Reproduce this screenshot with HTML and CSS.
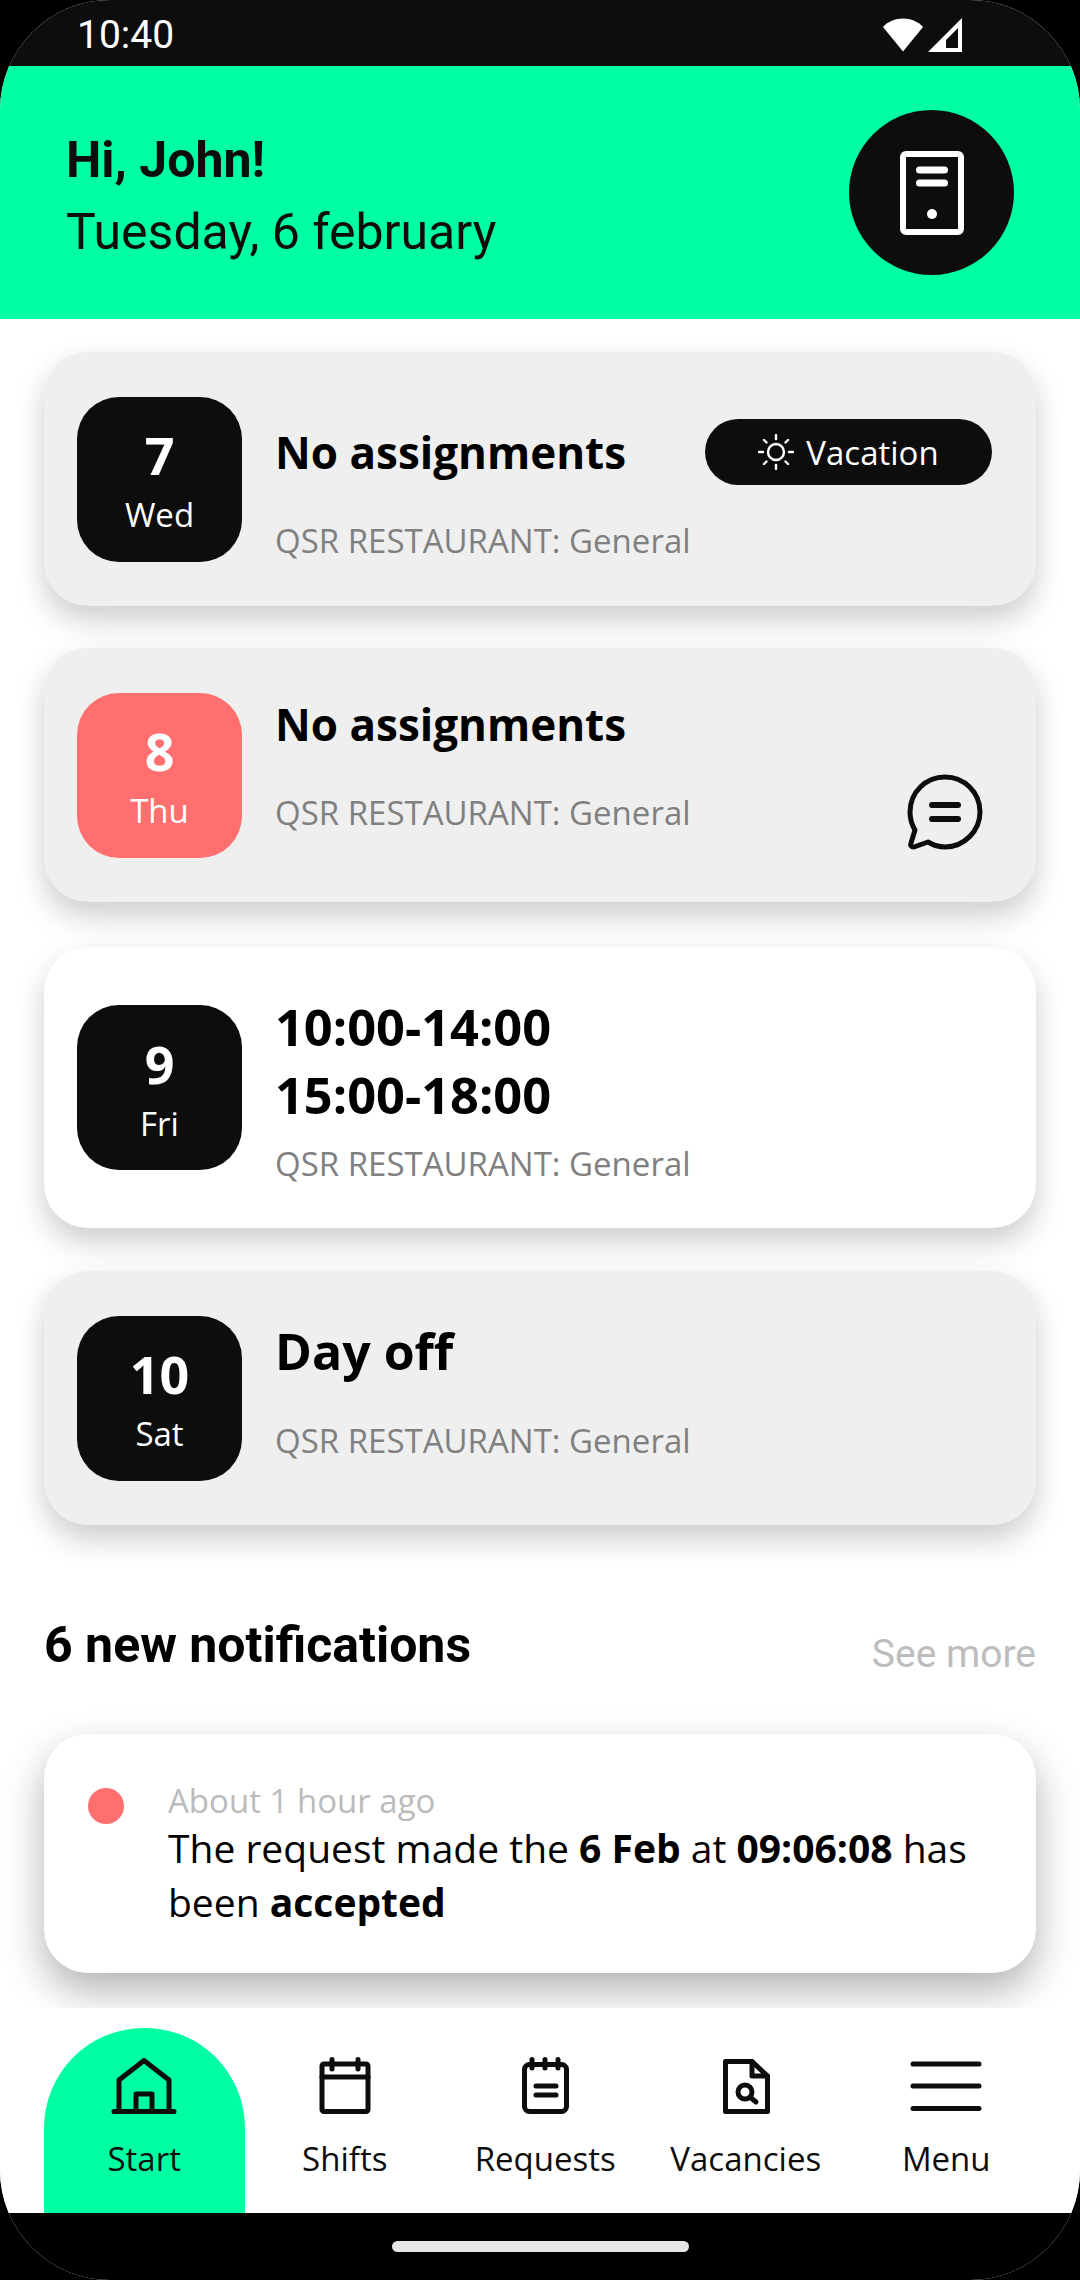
FILE: index.html
```html
<!DOCTYPE html>
<html lang="en">
<head>
  <meta charset="UTF-8">
  <title>Start</title>
  <meta name="viewport" content="width=device-width, initial-scale=1">
  <link rel="stylesheet" href="styles.css">
</head>
<body>
  <div class="screen">
    <div class="status-bar">
      <span class="clock">10:40</span>
      <span class="status-icons">
        <svg width="40" height="34" viewBox="0 0 40 34"><path d="M20 33.500 L0 9 C5 3.500 12 0.500 20 0.500 C28 0.500 35 3.500 40 9 Z" fill="#fff"/></svg>
        <svg width="34" height="34" viewBox="0 0 34 34"><path d="M34 0 V34 H0 Z M30 10 L18 22 V30 H30 Z" fill="#fff" fill-rule="evenodd"/></svg>
      </span>
    </div>

    <header class="top">
      <div>
        <div class="hello">Hi, John!</div>
        <div class="today">Tuesday, 6 february</div>
      </div>
      <div class="avatar">
        <svg width="64" height="84" viewBox="0 0 64 84" fill="none" stroke="#fff" stroke-width="6">
          <rect x="3" y="3" width="58" height="78" rx="3"/>
          <path d="M19.500 19 H44.500 M19.500 32 H44.500" stroke-width="7" stroke-linecap="round"/>
          <circle cx="32" cy="63" r="5" fill="#fff" stroke="none"/>
        </svg>
      </div>
    </header>

    <main class="content">
      <section class="card card-grey card-vacation">
        <div class="date"><b>7</b><span>Wed</span></div>
        <div class="card-text">
          <div class="title-row">
            <div class="title">No assignments</div>
            <div class="badge">
              <svg width="36" height="36" viewBox="0 0 36 36" fill="none" stroke="#fff" stroke-width="2.400" stroke-linecap="round">
                <circle cx="18" cy="18" r="8"/>
                <path d="M18 1 V5 M18 31 V35 M1 18 H5 M31 18 H35 M6 6 L8.500 8.500 M27.500 27.500 L30 30 M6 30 L8.500 27.500 M27.500 8.500 L30 6"/>
              </svg>
              Vacation
            </div>
          </div>
          <div class="place">QSR RESTAURANT: General</div>
        </div>
      </section>

      <section class="card card-grey card-note">
        <div class="date date-red"><b>8</b><span>Thu</span></div>
        <div class="card-text">
          <div class="title">No assignments</div>
          <div class="place">QSR RESTAURANT: General</div>
        </div>
        <svg class="chat" width="76" height="76" viewBox="0 0 76 76" fill="none" stroke="#0d0d0d" stroke-width="5" stroke-linecap="round" stroke-linejoin="round">
          <path d="M38 3 C57 3 73 18 73 38 C73 57 57 73 38 73 C31 73 26 71 21 68 L7 73 C4 73 3 71 4 69 L8 56 C5 51 3 45 3 38 C3 18 19 3 38 3 Z"/>
          <path d="M25 31 H51 M25 45 H51" stroke-width="6"/>
        </svg>
      </section>

      <section class="card card-shift">
        <div class="date"><b>9</b><span>Fri</span></div>
        <div class="card-text">
          <div class="title">10:00-14:00</div>
          <div class="title">15:00-18:00</div>
          <div class="place">QSR RESTAURANT: General</div>
        </div>
      </section>

      <section class="card card-grey card-off">
        <div class="date"><b>10</b><span>Sat</span></div>
        <div class="card-text">
          <div class="title">Day off</div>
          <div class="place">QSR RESTAURANT: General</div>
        </div>
      </section>

      <div class="notif-head">
        <h2>6 new notifications</h2>
        <a class="more">See more</a>
      </div>

      <section class="notif">
        <span class="dot"></span>
        <div>
          <div class="ago">About 1 hour ago</div>
          <p>The request made the <b>6 Feb</b> at <b>09:06:08</b> has been <b>accepted</b></p>
        </div>
      </section>
    </main>

    <nav class="tabs">
      <div class="tab tab-active">
        <svg width="72" height="58" viewBox="0 0 72 58" fill="none" stroke="#0d0d0d" stroke-width="5" stroke-linecap="round" stroke-linejoin="round">
          <path d="M6 54.500 H66 M11 54 V23 L36 3.500 L61 23 V54"/>
          <path d="M28 54 V37 H44 V54"/>
        </svg>
        <span>Start</span>
      </div>
      <div class="tab">
        <svg width="72" height="58" viewBox="0 0 72 58" fill="none" stroke="#0d0d0d" stroke-width="5" stroke-linecap="round" stroke-linejoin="round">
          <rect x="13" y="7" width="46" height="47.500" rx="2"/>
          <path d="M13 20 H59 M23 2.500 V12 M49 2.500 V12"/>
        </svg>
        <span>Shifts</span>
      </div>
      <div class="tab">
        <svg width="72" height="58" viewBox="0 0 72 58" fill="none" stroke="#0d0d0d" stroke-width="5" stroke-linecap="round" stroke-linejoin="round">
          <rect x="15.500" y="7.500" width="42" height="47" rx="5"/>
          <path d="M23 2.500 V11 M36 2.500 V11 M49 2.500 V11 M27 29 H47 M27 38 H47"/>
        </svg>
        <span>Requests</span>
      </div>
      <div class="tab">
        <svg width="72" height="58" viewBox="0 0 72 58" fill="none" stroke="#0d0d0d" stroke-width="5" stroke-linecap="round" stroke-linejoin="round">
          <path d="M15.500 4.500 H42 L57.500 19 V54.500 H15.500 Z"/>
          <path d="M42 4.500 V19 H57.500"/>
          <circle cx="35" cy="35" r="7"/>
          <path d="M40.500 40.500 L46 45"/>
        </svg>
        <span>Vacancies</span>
      </div>
      <div class="tab">
        <svg width="72" height="58" viewBox="0 0 72 58" fill="none" stroke="#0d0d0d" stroke-width="5" stroke-linecap="round">
          <path d="M3 7 H69 M3 29 H69 M3 51.500 H69"/>
        </svg>
        <span>Menu</span>
      </div>
    </nav>

    <div class="nav-bar"><span class="home-pill"></span></div>
  </div>
</body>
</html>
```

FILE: styles.css
```css
html, body {
  margin: 0;
  padding: 0;
  background: #000;
}
body {
  font-family: 'Open Sans', sans-serif;
  color: #0d0d0d;
}
.screen {
  width: 1080px;
  height: 2280px;
  background: #fff;
  border-radius: 110px;
  overflow: hidden;
  display: flex;
  flex-direction: column;
}

/* status bar */
.status-bar {
  height: 66px;
  flex: none;
  box-sizing: border-box;
  padding: 4px 118px 0 77px;
  background: #0d0d0d;
  color: #fff;
  display: flex;
  justify-content: space-between;
  align-items: center;
}
.clock {
  font-family: Roboto, sans-serif;
  font-size: 39px;
}
.status-icons {
  display: flex;
  gap: 5px;
}

/* green header */
.top {
  height: 253px;
  flex: none;
  box-sizing: border-box;
  padding: 0 66px 0 66px;
  background: #00ffa3;
  display: flex;
  justify-content: space-between;
  align-items: center;
  font-family: Roboto, sans-serif;
  font-size: 50px;
  color: #0d0d0d;
}
.hello {
  margin-top: 6px;
  font-weight: 700;
  line-height: 72px;
}
.today {
  line-height: 72px;
}
.avatar {
  width: 165px;
  height: 165px;
  border-radius: 50%;
  background: #0d0d0d;
  display: flex;
  align-items: center;
  justify-content: center;
}

/* scroll area */
.content {
  flex: 1;
  min-height: 0;
  overflow: hidden;
  padding: 33px 44px 0;
}
.card {
  height: 254px;
  margin-bottom: 43px;
  padding: 0 33px;
  border-radius: 44px;
  background: #fff;
  box-shadow: 0 14px 30px rgba(0, 0, 0, 0.2);
  display: flex;
  align-items: center;
  gap: 33px;
}
.card-grey {
  background: #efefef;
}
.card-vacation {
  margin-bottom: 42px;
}
.card-note {
  margin-bottom: 45px;
}
.card-shift {
  height: 281px;
}
.date {
  width: 165px;
  height: 165px;
  flex: none;
  box-sizing: border-box;
  padding-top: 3px;
  border-radius: 42px;
  background: #0d0d0d;
  color: #fff;
  display: flex;
  flex-direction: column;
  align-items: center;
  justify-content: center;
}
.date-red {
  background: #ff6f6f;
}
.date b {
  font-size: 52px;
  line-height: 62px;
}
.date span {
  margin-top: 7px;
  font-size: 33px;
  line-height: 44px;
}
.card-text {
  flex: 1;
  align-self: stretch;
  padding-top: 42px;
}
.card-vacation .card-text {
  padding-top: 66px;
}
.card-shift .card-text,
.card-off .card-text {
  padding-top: 46px;
}
.title {
  font-size: 44px;
  font-weight: 700;
  line-height: 68px;
  color: #000;
}
.card-shift .title {
  font-size: 50.500px;
}
.card-off .title {
  font-size: 50px;
}
.title-row {
  display: flex;
  justify-content: space-between;
  align-items: center;
  padding-right: 11px;
}
.badge {
  width: 287px;
  height: 66px;
  border-radius: 33px;
  background: #0d0d0d;
  color: #fff;
  font-size: 33px;
  display: flex;
  align-items: center;
  justify-content: center;
  gap: 12px;
}
.place {
  margin-top: 33px;
  font-size: 33px;
  line-height: 44px;
  color: #808080;
}
.card-shift .place {
  margin-top: 13px;
}
.card-off .place {
  margin-top: 34px;
}
.chat {
  flex: none;
  align-self: flex-end;
  margin: 0 20px 52px 0;
}

/* notifications */
.notif-head {
  display: flex;
  justify-content: space-between;
  margin-top: 88px;
}
.notif-head h2 {
  margin: 0;
  font-family: Roboto, sans-serif;
  font-size: 50px;
  font-weight: 700;
  line-height: 64px;
  color: #000;
}
.more {
  margin-top: 9px;
  font-family: Roboto, sans-serif;
  font-size: 39px;
  line-height: 64px;
  color: #bdbdbd;
}
.notif {
  margin-top: 48px;
  height: 239px;
  box-sizing: border-box;
  padding: 46px 44px 0;
  border-radius: 44px;
  background: #fff;
  box-shadow: 0 18px 40px rgba(0, 0, 0, 0.3);
  display: flex;
  gap: 44px;
}
.dot {
  width: 36px;
  height: 36px;
  flex: none;
  margin-top: 8px;
  border-radius: 50%;
  background: #ff6f6f;
}
.ago {
  font-size: 33px;
  line-height: 41px;
  color: #bbb;
}
.notif p {
  margin: 0;
  font-size: 39px;
  line-height: 54px;
  color: #000;
}

/* bottom tabs */
.tabs {
  height: 205px;
  flex: none;
  box-sizing: border-box;
  padding-left: 44px;
  background: #fff;
  display: flex;
  align-items: flex-end;
  position: relative;
}
.tab {
  width: 200.500px;
  height: 185px;
  flex: none;
  box-sizing: border-box;
  padding-top: 29px;
  display: flex;
  flex-direction: column;
  align-items: center;
  font-size: 33px;
}
.tab span {
  margin-top: 22px;
  line-height: 44px;
}
.tab-active {
  background: #00ffa3;
  border-radius: 100px 100px 0 0;
}
.nav-bar {
  height: 67px;
  flex: none;
  box-sizing: border-box;
  padding-top: 28px;
  background: #000;
  display: flex;
  justify-content: center;
}
.home-pill {
  width: 297px;
  height: 11px;
  border-radius: 6px;
  background: #e6e6e6;
}
```
